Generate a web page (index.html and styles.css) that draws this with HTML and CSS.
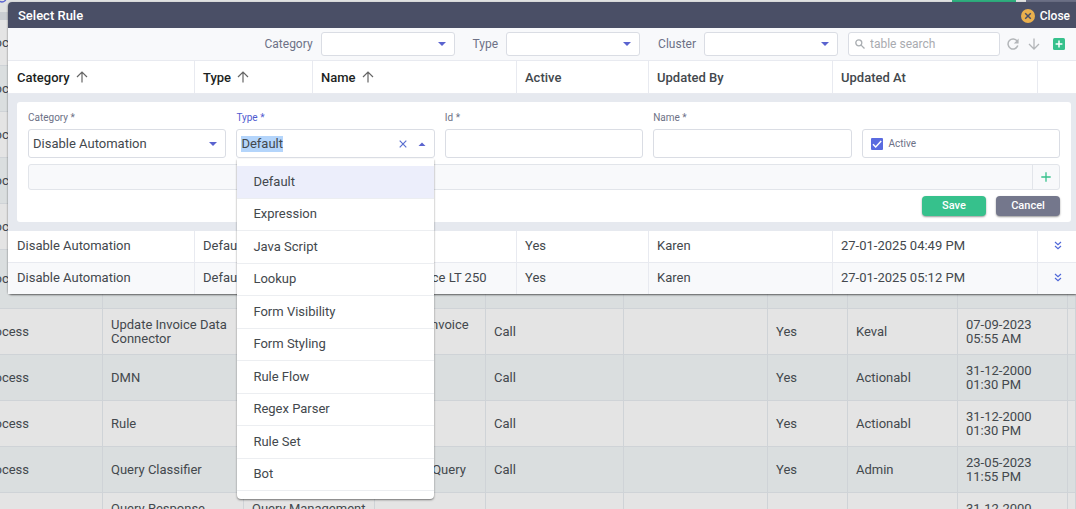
FILE: index.html
```html
<!DOCTYPE html>
<html lang="en">
<head>
<meta charset="utf-8">
<title>Select Rule</title>
<link rel="stylesheet" href="styles.css">
</head>
<body>
<main class="page">
  <div class="page-bar">
    <svg class="page-mark" width="12" height="12" viewBox="0 0 12 12" aria-hidden="true"><circle cx="2" cy="-2" r="4" fill="none" stroke="#5a63cf" stroke-width="1.5"/></svg>
    <span class="page-action page-action-green"></span>
    <span class="page-action page-action-grey"></span>
  </div>
  <table class="steps">
    <colgroup><col class="s1"><col class="s2"><col class="s3"><col class="s4"><col class="s5"><col class="s6"><col class="s7"><col class="s8"><col class="s9"><col class="s10"></colgroup>
    <tbody>
      <tr><td>Process</td><td></td><td></td><td></td><td></td><td></td><td></td><td></td><td></td><td></td></tr>
      <tr><td>Process</td><td></td><td></td><td></td><td></td><td></td><td></td><td></td><td></td><td></td></tr>
      <tr><td>Process</td><td></td><td></td><td></td><td></td><td></td><td></td><td></td><td></td><td></td></tr>
      <tr><td>Process</td><td></td><td></td><td></td><td></td><td></td><td></td><td></td><td></td><td></td></tr>
      <tr><td>Process</td><td></td><td></td><td></td><td></td><td></td><td></td><td></td><td></td><td></td></tr>
      <tr class="tall"><td>Process</td><td></td><td></td><td></td><td></td><td></td><td></td><td></td><td></td><td></td></tr>
      <tr><td>Process</td><td>Update Invoice Data Connector</td><td></td><td>Update Invoice Data</td><td>Call</td><td></td><td>Yes</td><td>Keval</td><td>07-09-2023 05:55 AM</td><td></td></tr>
      <tr><td>Process</td><td>DMN</td><td></td><td></td><td>Call</td><td></td><td>Yes</td><td>Actionabl</td><td>31-12-2000 01:30 PM</td><td></td></tr>
      <tr><td>Process</td><td>Rule</td><td></td><td></td><td>Call</td><td></td><td>Yes</td><td>Actionabl</td><td>31-12-2000 01:30 PM</td><td></td></tr>
      <tr><td>Process</td><td>Query Classifier</td><td></td><td>Classify Query</td><td>Call</td><td></td><td>Yes</td><td>Admin</td><td>23-05-2023 11:55 PM</td><td></td></tr>
      <tr><td>Process</td><td>Query Response Process</td><td>Query Management Process</td><td></td><td>Call</td><td></td><td>Yes</td><td>Admin</td><td>31-12-2000 01:30 PM</td><td></td></tr>
    </tbody>
  </table>
</main>

<section class="dialog" role="dialog" aria-labelledby="dialog-title">
  <header class="dialog-head">
    <h1 class="dialog-title" id="dialog-title">Select Rule</h1>
    <button type="button" class="close">
      <svg width="14" height="14" viewBox="0 0 14 14" aria-hidden="true"><circle cx="7" cy="7" r="7" fill="#eab04d"/><path d="M4.2 4.2l5.6 5.6M9.8 4.2l-5.6 5.6" stroke="#4a4f66" stroke-width="1.5" fill="none"/></svg>
      Close
    </button>
  </header>

  <div class="toolbar">
    <label class="filter">Category <span class="select-box"><select class="control"><option></option></select></span></label>
    <label class="filter">Type <span class="select-box"><select class="control"><option></option></select></span></label>
    <label class="filter">Cluster <span class="select-box"><select class="control"><option></option></select></span></label>
    <label class="search">
      <svg width="10" height="10" viewBox="0 0 10 10" aria-hidden="true"><g fill="none" stroke="#a9adb1" stroke-width="1.3"><circle cx="3.8" cy="3.8" r="3"/><path d="M6.1 6.1l3.4 3.4"/></g></svg>
      <input class="search-input" type="search" placeholder="table search" aria-label="table search">
    </label>
    <div class="tools">
      <button type="button" class="icon-button" aria-label="Refresh"><svg width="12" height="12" viewBox="0 0 12 12"><path d="M10.2 3.2A5 5 0 1 0 10.8 7.6" fill="none" stroke="#b3b6b9" stroke-width="1.5"/><path d="M11.6.6v4.8H6.8z" fill="#b3b6b9"/></svg></button>
      <button type="button" class="icon-button" aria-label="Download"><svg width="12" height="12" viewBox="0 0 12 12"><path d="M6 .5v10.3M1 6l5 5 5-5" fill="none" stroke="#b3b6b9" stroke-width="1.3"/></svg></button>
      <button type="button" class="icon-button add" aria-label="Add"><svg width="12" height="12" viewBox="0 0 12 12"><rect width="12" height="12" rx="1.5" fill="#36c18c"/><path d="M6 2.6v6.8M2.6 6h6.8" stroke="#fff" stroke-width="1.5"/></svg></button>
    </div>
  </div>

  <table class="rules">
    <colgroup><col class="r1"><col class="r2"><col class="r3"><col class="r4"><col class="r5"><col class="r6"><col class="r7"></colgroup>
    <thead>
      <tr>
        <th class="sorted">Category <svg width="12" height="12" viewBox="0 0 12 12" aria-hidden="true"><path d="M6 11.5V1.3M1 6l5-5 5 5" fill="none" stroke="#666" stroke-width="1.2"/></svg></th>
        <th class="sorted">Type <svg width="12" height="12" viewBox="0 0 12 12" aria-hidden="true"><path d="M6 11.5V1.3M1 6l5-5 5 5" fill="none" stroke="#666" stroke-width="1.2"/></svg></th>
        <th class="sorted">Name <svg width="12" height="12" viewBox="0 0 12 12" aria-hidden="true"><path d="M6 11.5V1.3M1 6l5-5 5 5" fill="none" stroke="#666" stroke-width="1.2"/></svg></th>
        <th>Active</th>
        <th>Updated By</th>
        <th>Updated At</th>
        <th></th>
      </tr>
    </thead>
    <tbody>
      <tr>
        <td class="editor" colspan="7">
          <form class="card">
            <div class="fields">
              <div class="field">
                <label for="f-category">Category *</label>
                <span class="select-box"><select class="control" id="f-category"><option>Disable Automation</option></select></span>
              </div>
              <div class="field field-open">
                <label for="f-type">Type *</label>
                <div class="combo">
                  <input class="combo-input" id="f-type" type="text" value="Default" role="combobox" aria-expanded="true" aria-controls="type-list" autocomplete="off" spellcheck="false">
                  <button type="button" class="icon-button" aria-label="Clear"><svg width="8" height="8" viewBox="0 0 8 8"><path d="M.7.7l6.6 6.6M7.3.7L.7 7.3" stroke="#5a6fd0" stroke-width="1.2"/></svg></button>
                  <button type="button" class="icon-button" aria-label="Collapse list"><svg width="8" height="4" viewBox="0 0 8 4"><path d="M.5 4L4 .5 7.5 4z" fill="#5a63cf"/></svg></button>
                </div>
                <div class="menu">
                  <ul class="options" id="type-list" role="listbox">
                    <li class="option option-current" role="option" aria-selected="true">Default</li>
                    <li class="option" role="option">Expression</li>
                    <li class="option" role="option">Java Script</li>
                    <li class="option" role="option">Lookup</li>
                    <li class="option" role="option">Form Visibility</li>
                    <li class="option" role="option">Form Styling</li>
                    <li class="option" role="option">Rule Flow</li>
                    <li class="option" role="option">Regex Parser</li>
                    <li class="option" role="option">Rule Set</li>
                    <li class="option" role="option">Bot</li>
                  </ul>
                </div>
              </div>
              <div class="field">
                <label for="f-id">Id *</label>
                <input class="control" id="f-id" type="text">
              </div>
              <div class="field">
                <label for="f-name">Name *</label>
                <input class="control" id="f-name" type="text">
              </div>
              <div class="field">
                <label class="check">
                  <input class="check-input" type="checkbox" checked>
                  <svg class="check-mark" width="12" height="12" viewBox="0 0 12 12" aria-hidden="true"><path d="M2 6.3l2.7 2.7L10.2 3" fill="none" stroke="#fff" stroke-width="1.5"/></svg>
                  Active
                </label>
              </div>
            </div>
            <div class="params">
              <button type="button" class="params-add" aria-label="Add parameter"><svg width="10" height="10" viewBox="0 0 10 10"><path d="M5 .3v9.4M.3 5h9.4" stroke="#36c18c" stroke-width="1.3"/></svg></button>
            </div>
            <div class="actions">
              <button type="button" class="btn btn-save">Save</button>
              <button type="button" class="btn btn-cancel">Cancel</button>
            </div>
          </form>
        </td>
      </tr>
      <tr class="rule">
        <td>Disable Automation</td><td>Default</td><td>Disable Auto</td><td>Yes</td><td>Karen</td><td>27-01-2025 04:49 PM</td>
        <td class="more"><button type="button" class="icon-button" aria-label="More"><svg width="8" height="9" viewBox="0 0 8 9"><path d="M1 1l3 2.6L7 1M1 5l3 2.6L7 5" fill="none" stroke="#5068d8" stroke-width="1.2"/></svg></button></td>
      </tr>
      <tr class="rule rule-alt">
        <td>Disable Automation</td><td>Default</td><td>Disable Auto - Invoice LT 250</td><td>Yes</td><td>Karen</td><td>27-01-2025 05:12 PM</td>
        <td class="more"><button type="button" class="icon-button" aria-label="More"><svg width="8" height="9" viewBox="0 0 8 9"><path d="M1 1l3 2.6L7 1M1 5l3 2.6L7 5" fill="none" stroke="#5068d8" stroke-width="1.2"/></svg></button></td>
      </tr>
    </tbody>
  </table>
</section>
<script src="script.js"></script>
</body>
</html>
```

FILE: styles.css
```css
* {
  box-sizing: border-box;
}

body {
  margin: 0;
  height: 100vh;
  overflow: hidden;
  background: #e4e4e4;
  color: #43484d;
  font: 13px/16px Roboto, "Liberation Sans", sans-serif;
}

button,
input,
select {
  margin: 0;
  font: inherit;
  color: inherit;
}

svg {
  display: block;
  flex: none;
}

/* Page under the dialog */
.page {
  height: 100%;
  overflow: hidden;
}

.page-bar {
  display: flex;
  gap: 10px;
  height: 20px;
  background: #dfe1e1;
  border-bottom: 8px solid #c9cdd2;
}

.page-mark {
  margin-right: auto;
}

.page-action {
  height: 10px;
}

.page-action-green {
  width: 64px;
  background: #2fae7e;
}

.page-action-grey {
  width: 50px;
  background: #6b6f85;
}

.steps {
  width: calc(100% + 26px);
  margin-left: -26px;
  table-layout: fixed;
  border-collapse: separate;
  border-spacing: 0;
  line-height: 14px;
}

.steps td {
  height: 46px;
  padding: 0 8px;
  border-right: 1px solid #cfd3d7;
  border-bottom: 1px solid #cfd3d7;
}

.steps .tall td {
  height: 59px;
}

.steps tr:nth-child(even) td {
  background: #dadedf;
}

.s1 { width: 129px; }
.s2 { width: 141px; }
.s3 { width: 131px; }
.s4 { width: 111px; }
.s5 { width: 138px; }
.s6 { width: 144px; }
.s7 { width: 80px; }
.s8 { width: 110px; }
.s9 { width: 110px; }
.s10 { width: 8px; }

.steps td:last-child {
  padding: 0;
}

/* Dialog */
.dialog {
  position: absolute;
  top: 2px;
  right: 0;
  left: 8px;
  border-radius: 4px 0 0 4px;
  background: #fff;
  box-shadow: 0 1px 2px rgba(0, 0, 0, 0.6);
}

.dialog-head {
  display: flex;
  align-items: center;
  justify-content: space-between;
  height: 26px;
  padding: 1px 6px 0 10px;
  border-radius: 4px 0 0 0;
  background: #4a4f66;
  color: #fff;
}

.dialog-title {
  margin: 0;
  font-size: 13px;
  font-weight: 500;
}

.close {
  display: flex;
  align-items: center;
  gap: 5px;
  padding: 0;
  border: 0;
  background: none;
  font-size: 12px;
  font-weight: 500;
}

.toolbar {
  display: flex;
  align-items: center;
  justify-content: flex-end;
  height: 33px;
  padding-right: 11px;
  border-bottom: 1px solid #e8eaf0;
  background: #f8f9fb;
}

.filter {
  display: flex;
  align-items: center;
  gap: 8px;
  margin-right: 18px;
  color: #6d7186;
  font-size: 12px;
}

.filter .select-box {
  width: 134px;
}

.filter:nth-child(3) {
  margin-right: 10px;
}

.control,
.combo,
.check,
.search {
  width: 100%;
  height: 29px;
  border: 1px solid #dadde4;
  border-radius: 3px;
  background: #fff;
}

.toolbar .control,
.toolbar .search {
  height: 24px;
}

.control {
  display: block;
  padding: 0 4px;
  appearance: none;
  outline: 0;
}

.select-box {
  position: relative;
}

.select-box::after {
  content: "";
  position: absolute;
  top: calc(50% - 2px);
  right: 9px;
  border: 4px solid transparent;
  border-top-color: #5a63cf;
  border-bottom: 0;
  pointer-events: none;
}

.search {
  display: flex;
  align-items: center;
  gap: 5px;
  width: 152px;
  padding: 0 6px;
}

.search-input {
  width: 100%;
  min-width: 0;
  padding: 0;
  border: 0;
  outline: 0;
  background: none;
  font-size: 12px;
}

.search-input::placeholder {
  color: #a9abb0;
}

.tools {
  display: flex;
  align-items: center;
  gap: 9px;
  margin-left: 7px;
}

.icon-button {
  display: flex;
  align-items: center;
  justify-content: center;
  padding: 0;
  border: 0;
  background: none;
}

.add {
  margin-left: 4px;
}

/* Rules table */
.rules {
  width: 100%;
  table-layout: fixed;
  border-collapse: separate;
  border-spacing: 0;
}

.r1 { width: 187px; }
.r2 { width: 118px; }
.r3 { width: 204px; }
.r4 { width: 132px; }
.r5 { width: 184px; }
.r6 { width: 205px; }
.r7 { width: 38px; }

.rules th,
.rule td {
  height: 32px;
  padding: 0 0 2px 8px;
  border-right: 1px solid #e8eaf0;
  text-align: left;
  white-space: nowrap;
}

.rules th {
  height: 33px;
  padding: 2px 0 0 8px;
  border-bottom: 1px solid #e8eaf0;
  font-weight: 500;
}

.rules th:first-child,
.rule td:first-child {
  padding-left: 9px;
}

.rules .sorted {
  color: #1c1f22;
}

.sorted svg {
  display: inline-block;
  margin-left: 3px;
  vertical-align: -1px;
}

.rules th:last-child,
.rules td:last-child {
  border-right: 0;
}

.rule td {
  height: 31px;
}

.rule-alt td {
  height: 32px;
  border-top: 1px solid #e8eaf0;
  background: #f8f9fb;
}

.more .icon-button {
  margin-left: 8px;
}

.editor {
  padding: 8px 5px 9px 9px;
  background: #e6e9ef;
}

.card {
  padding: 10px 11px 6px;
  border-radius: 3px;
  background: #fff;
}

.fields {
  display: grid;
  grid-template-columns: repeat(5, minmax(0, 1fr));
  align-items: end;
  gap: 10px;
}

.field {
  display: flex;
  flex-direction: column;
  gap: 5px;
  color: #43484d;
}

.field > label:not(.check) {
  color: #6d7186;
  font-size: 10px;
  line-height: 12px;
}

.field-open {
  position: relative;
}

.field.field-open > label {
  color: #4f5bd0;
}

.combo {
  display: flex;
  align-items: center;
  gap: 11px;
  padding: 0 8px 0 4px;
}

.combo-input {
  flex: 1;
  min-width: 0;
  padding: 0;
  border: 0;
  outline: 0;
  background: none;
}

.combo-input::selection {
  background: #b4d5fb;
  color: #43484d;
}

.menu {
  position: absolute;
  z-index: 2;
  top: calc(100% + 1px);
  right: 1px;
  left: 1px;
  padding: 7px 0 8px;
  border-radius: 0 0 4px 4px;
  background: #fff;
  box-shadow: 0 1px 2px rgba(0, 0, 0, 0.5);
}

.options {
  display: grid;
  grid-template-rows: repeat(10, 1fr);
  height: 325px;
  margin: 0;
  padding: 0;
  list-style: none;
}

.option {
  display: flex;
  align-items: center;
  padding: 0 16px;
  border-bottom: 1px solid #eceef1;
}

.option-current {
  background: #eceefb;
}

.check {
  display: flex;
  align-items: center;
  gap: 6px;
  padding: 0 8px;
  color: #6d7186;
  font-size: 10px;
}

.check-input {
  width: 12px;
  height: 12px;
  border-radius: 1px;
  appearance: none;
  background: #5a6be0;
}

.check-mark {
  margin-left: -18px;
}

.check-input:not(:checked) + .check-mark {
  visibility: hidden;
}

.params {
  display: flex;
  justify-content: flex-end;
  height: 26px;
  margin-top: 6px;
  border: 1px solid #e2e5ea;
  border-radius: 3px;
  background: #f8f9fb;
}

.params-add {
  display: flex;
  align-items: center;
  justify-content: center;
  width: 27px;
  padding: 0;
  border: 0;
  border-left: 1px solid #e2e5ea;
  background: none;
}

.actions {
  display: flex;
  justify-content: flex-end;
  gap: 10px;
  margin-top: 6px;
}

.btn {
  width: 64px;
  height: 20px;
  padding: 0;
  border: 0;
  border-radius: 4px;
  box-shadow: 0 1px 2px rgba(0, 0, 0, 0.4);
  color: #fff;
  font-size: 11px;
  font-weight: 500;
}

.btn-save {
  background: #36c18c;
}

.btn-cancel {
  background: #74778c;
}
```

FILE: script.js
```js
const typeInput = document.getElementById("f-type");
typeInput.focus();
typeInput.select();
```
